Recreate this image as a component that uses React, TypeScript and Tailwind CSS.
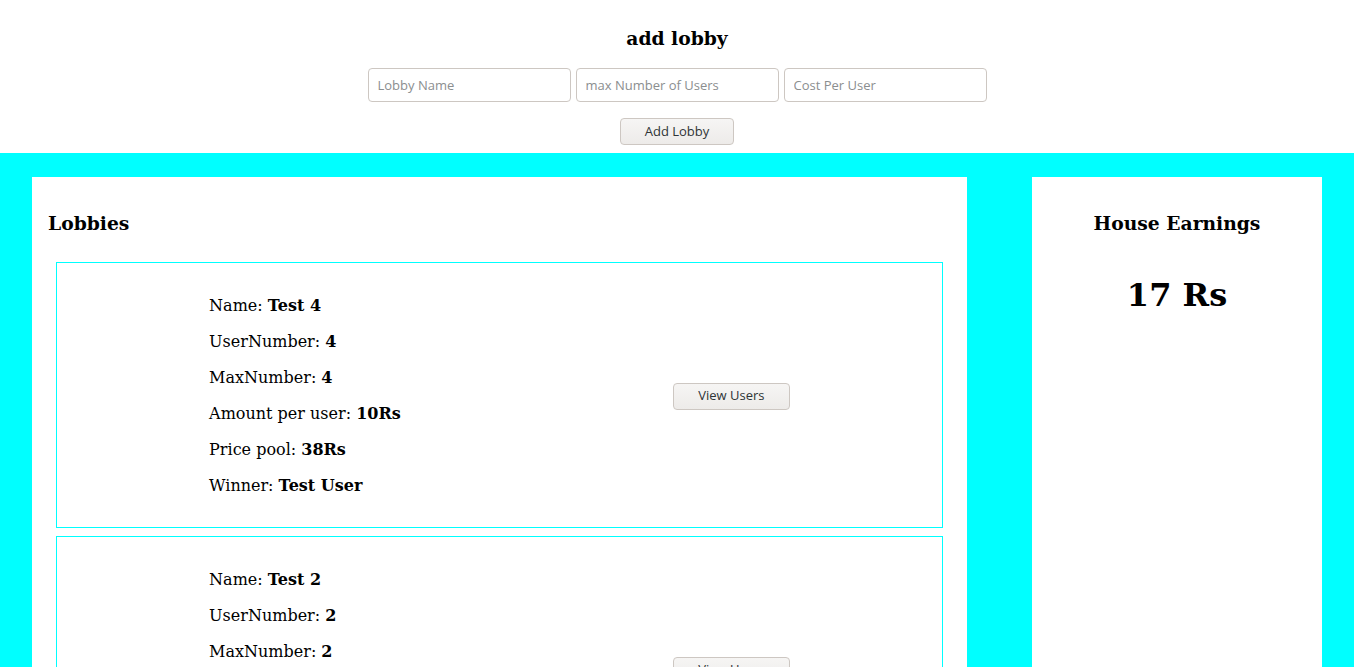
import React from "react";

type Lobby = {
  name: string;
  userNumber: number;
  maxNumber: number;
  amount: number;
  pool: number;
  winner: string;
};

const lobbies: Lobby[] = [
  { name: "Test 4", userNumber: 4, maxNumber: 4, amount: 10, pool: 38, winner: "Test User" },
  { name: "Test 2", userNumber: 2, maxNumber: 2, amount: 10, pool: 18, winner: "Test User" },
];

const serif = { fontFamily: '"DejaVu Serif", serif' };

function GtkButton({ children, className = "" }: { children: React.ReactNode; className?: string }) {
  return (
    <button
      className={`h-[27px] rounded-[4px] border border-[#cdc7c2] bg-gradient-to-b from-[#f6f5f4] to-[#edebe9] text-[13px] text-[#2e3436] font-['Open_Sans',sans-serif] ${className}`}
    >
      {children}
    </button>
  );
}

function LobbyCard({ lobby }: { lobby: Lobby }) {
  return (
    <div className="m-2 flex items-center justify-around border border-[#00ffff] px-4 pt-[17px] pb-[15px]">
      <div className="text-base leading-[20px] text-black" style={serif}>
        <p className="my-4">
          Name: <b>{lobby.name}</b>
        </p>
        <p className="my-4">
          UserNumber: <b>{lobby.userNumber}</b>
        </p>
        <p className="my-4">
          MaxNumber: <b>{lobby.maxNumber}</b>
        </p>
        <p className="my-4">
          Amount per user: <b>{lobby.amount}Rs</b>
        </p>
        <p className="my-4">
          Price pool: <b>{lobby.pool}Rs</b>
        </p>
        <p className="my-4">
          Winner: <b>{lobby.winner}</b>
        </p>
      </div>
      <GtkButton className="w-[117px]">View Users</GtkButton>
    </div>
  );
}

export default function App() {
  return (
    <div className="min-h-screen bg-white">
      {/* add lobby form */}
      <div className="flex flex-col items-center pt-[27px] pb-2">
        <h3 className="text-[18.72px] font-bold leading-[22px] text-black" style={serif}>
          add lobby
        </h3>
        <div className="mt-[19px] flex gap-[5px]">
          {["Lobby Name", "max Number of Users", "Cost Per User"].map((p) => (
            <input
              key={p}
              placeholder={p}
              className="h-[34px] w-[203px] rounded-[4px] border border-[#cdc7c2] bg-white px-[9px] text-[13px] text-[#2e3436] placeholder:text-[#8b8e8f] outline-none font-['Open_Sans',sans-serif]"
            />
          ))}
        </div>
        <GtkButton className="mt-4 w-[114px]">Add Lobby</GtkButton>
      </div>

      {/* main area */}
      <div className="flex gap-[65px] bg-[#00ffff] px-8 pt-6" style={serif}>
        <div className="flex-1 bg-white p-4">
          <h3 className="mt-[19px] mb-[28px] text-[18.72px] font-bold leading-[22px]">Lobbies</h3>
          {lobbies.map((l) => (
            <LobbyCard key={l.name} lobby={l} />
          ))}
        </div>
        <div className="w-[290px] self-start bg-white p-4 text-center min-h-[600px]">
          <h3 className="mt-[19px] text-[18.72px] font-bold leading-[22px]">House Earnings</h3>
          <h1 className="mt-[42px] text-[32px] font-bold leading-[38px]">17 Rs</h1>
        </div>
      </div>
    </div>
  );
}
